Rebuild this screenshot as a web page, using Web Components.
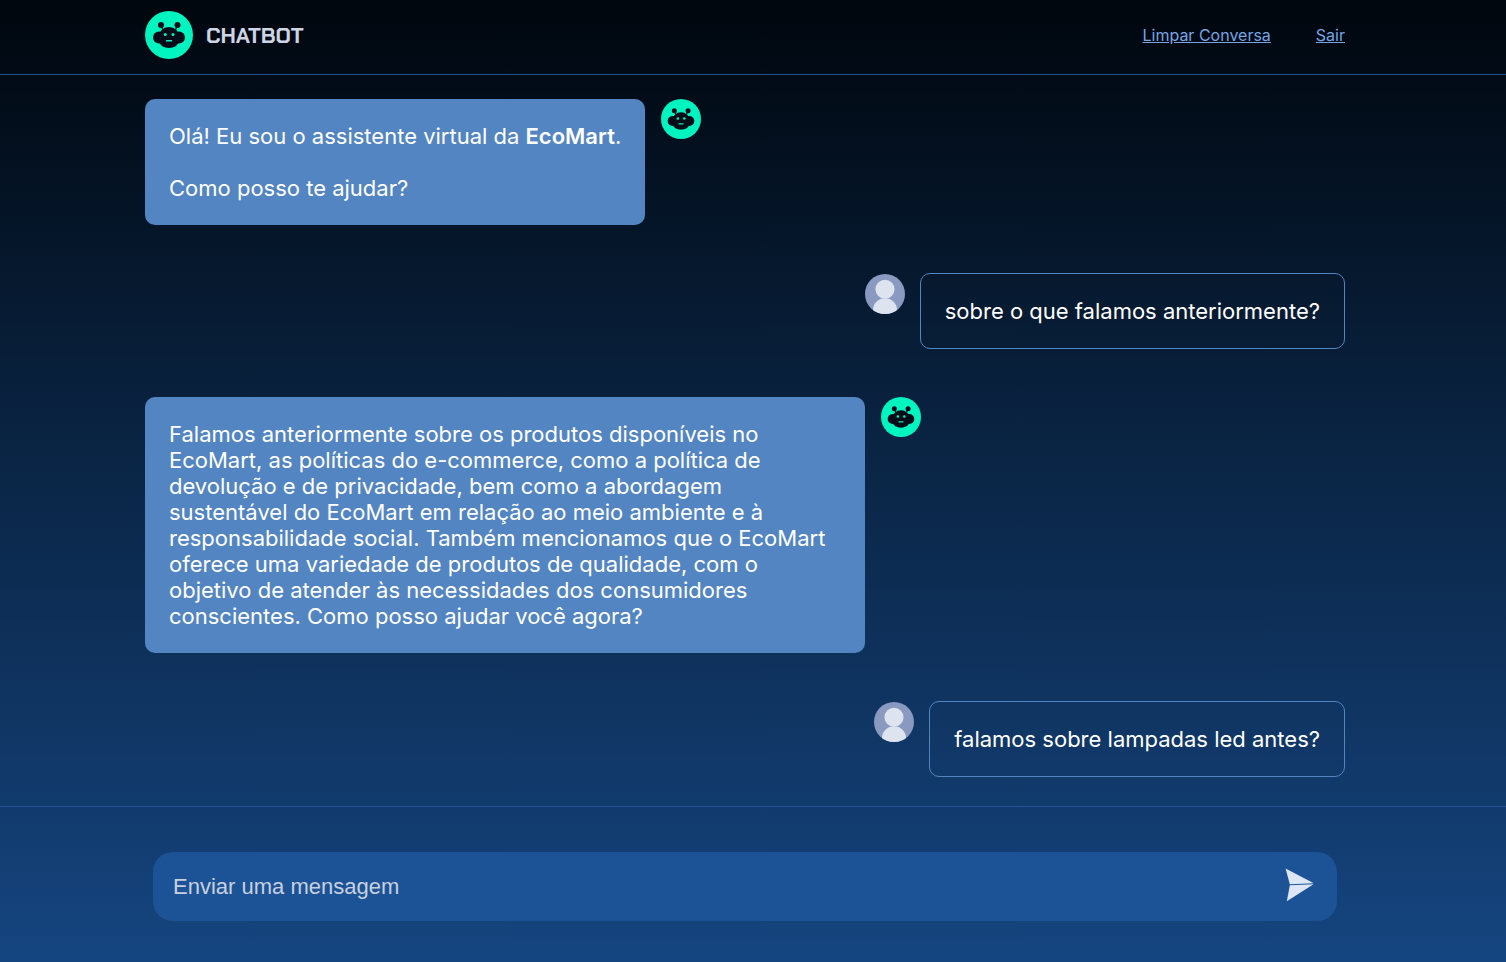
<!DOCTYPE html>
<html lang="pt-BR">
<head>
<meta charset="utf-8">
<meta name="viewport" content="width=device-width, initial-scale=1">
<title>Chatbot</title>
<style>
  body { margin: 0; min-height: 100vh; background: linear-gradient(#00060d, #0a2545 48%, #154580) no-repeat; font-family: Inter, "Open Sans", sans-serif; font-size: 22px; font-weight: 400; line-height: 26px; color: #fff; }
</style>
</head>
<body>
<chat-app></chat-app>
<script>
const define = (name, html, setup) => {
  const template = document.createElement('template');
  template.innerHTML = html;
  customElements.define(name, class extends HTMLElement {
    constructor() {
      super();
      this.attachShadow({ mode: 'open' }).append(template.content.cloneNode(true));
      if (setup) setup(this.shadowRoot);
    }
  });
};

define('bot-avatar', `
<style>:host { display: block; flex: none; width: 40px; height: 40px; } svg { display: block; width: 100%; height: 100%; }</style>
<svg viewBox="0 0 48 48" aria-hidden="true">
  <circle cx="24" cy="24" r="24" fill="#00f4bf"/>
  <g fill="#010d18">
    <circle cx="16" cy="14" r="3"/><circle cx="32.5" cy="14" r="3"/>
    <path d="M16 14l2.500 6M32.500 14l-2.500 6" stroke="#010d18" stroke-width="1.400"/>
    <ellipse cx="24" cy="26" rx="10.500" ry="10"/>
    <ellipse cx="14" cy="26.500" rx="6" ry="6"/><ellipse cx="34" cy="26.500" rx="6" ry="6"/>
    <ellipse cx="24" cy="31" rx="9.500" ry="6"/>
  </g>
  <g fill="#00f4bf"><circle cx="20.300" cy="23.500" r="1.500"/><circle cx="28" cy="23.500" r="1.500"/><rect x="21" y="29" width="6" height="1.600" rx=".5"/></g>
</svg>`);

define('user-avatar', `
<style>:host { display: block; flex: none; width: 40px; height: 40px; } svg { display: block; width: 100%; height: 100%; border-radius: 50%; }</style>
<svg viewBox="0 0 40 40" aria-hidden="true">
  <rect width="40" height="40" fill="#8a99bf"/>
  <g fill="#dde4f0"><circle cx="20" cy="15.300" r="9.500"/><path d="M8 40V36a12 11.800 0 0 1 24 0v4z"/></g>
</svg>`);

define('chat-header', `
<style>
  :host { display: block; border-bottom: 1px solid #205295; padding: 11px 16px 15px 0; }
  header { max-width: 1200px; margin: 0 auto; display: flex; align-items: center; gap: 13px; }
  bot-avatar { width: 48px; height: 48px; }
  h1 { margin: 0 auto 0 0; padding-top: 2px; font: 700 22px/28px "Chakra Petch", Inter, sans-serif; color: #cdd5e4; }
  nav { display: flex; gap: 45px; font-size: 16px; line-height: 20px; }
  a { color: #76a5e4; }
</style>
<header><bot-avatar></bot-avatar><h1>CHATBOT</h1>
<nav><a href="#limpar">Limpar Conversa</a><a href="#sair">Sair</a></nav></header>`);

define('bot-message', `
<style>
  :host { display: flex; align-items: flex-start; gap: 16px; }
  .bubble { box-sizing: border-box; max-width: 60%; padding: 24px; border-radius: 10px; background: #5385c2; }
</style>
<div class="bubble"><slot></slot></div><bot-avatar></bot-avatar>`);

define('user-message', `
<style>
  :host { display: flex; align-items: flex-start; justify-content: flex-end; gap: 15px; }
  .bubble { box-sizing: border-box; max-width: 60%; padding: 24px; border: 1px solid #5385c2; border-radius: 10px; }
  user-avatar { margin-top: 1px; }
</style>
<user-avatar></user-avatar><div class="bubble"><slot></slot></div>`);

define('chat-composer', `
<style>
  :host { display: block; border-top: 1px solid #205295; padding: 45px 16px 41px 0; }
  form { box-sizing: border-box; max-width: 1184px; margin: 0 auto; display: flex; align-items: center; padding: 0 20px; border-radius: 20px; background: #1c5397; }
  input { flex: 1; min-width: 0; box-sizing: border-box; height: 69px; padding: 0; border: 0; outline: 0; background: none; color: #fff; font: 22px/26px "Liberation Sans", Arial, sans-serif; }
  input::placeholder { color: #c8d0df; opacity: 1; }
  button { flex: none; padding: 0; border: 0; background: none; cursor: pointer; }
  svg { display: block; width: 36px; height: 38px; }
</style>
<form>
  <input type="text" aria-label="Mensagem" placeholder="Enviar uma mensagem">
  <button type="button" aria-label="Enviar"><svg viewBox="0 0 36 38" fill="#dde6f4"><path d="M4.600 0.500L32.800 15.300L8.800 16.300z"/><path d="M8.800 17.200L32.500 16.200L5.800 33.300z"/></svg></button>
</form>`, root => root.querySelector('form').addEventListener('submit', e => e.preventDefault()));

define('chat-app', `
<style>
  :host { display: flex; flex-direction: column; min-height: 100vh; }
  main { flex: 1; padding: 24px 16px 29px 0; }
  .thread { max-width: 1200px; margin: 0 auto; display: flex; flex-direction: column; gap: 48px; }
  p { margin: 0 0 26px; } p:last-child { margin: 0; }
  b { font-weight: 600; }
</style>
<chat-header></chat-header>
<main><div class="thread">
  <bot-message><p>Olá! Eu sou o assistente virtual da <b>EcoMart</b>.</p><p>Como posso te ajudar?</p></bot-message>
  <user-message><p>sobre o que falamos anteriormente?</p></user-message>
  <bot-message><p>Falamos anteriormente sobre os produtos disponíveis no EcoMart, as políticas do e-commerce, como a política de devolução e de privacidade, bem como a abordagem sustentável do EcoMart em relação ao meio ambiente e à responsabilidade social. Também mencionamos que o EcoMart oferece uma variedade de produtos de qualidade, com o objetivo de atender às necessidades dos consumidores conscientes. Como posso ajudar você agora?</p></bot-message>
  <user-message><p>falamos sobre lampadas led antes?</p></user-message>
</div></main>
<chat-composer></chat-composer>`);
</script>
</body>
</html>
